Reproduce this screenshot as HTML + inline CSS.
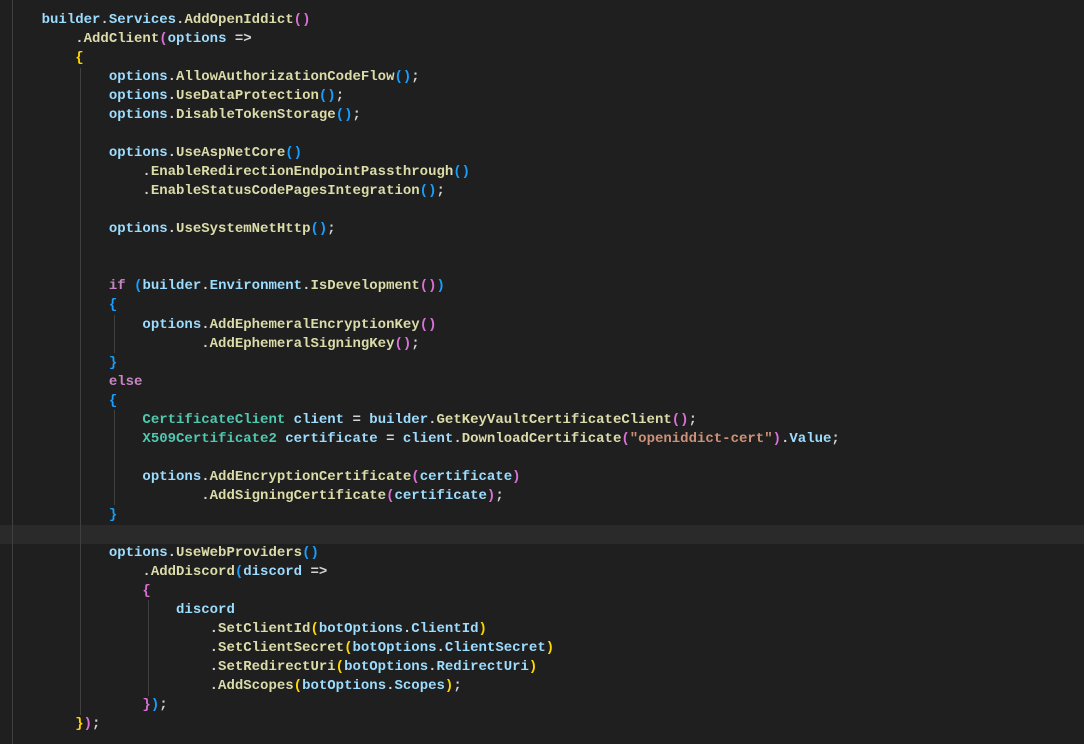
<!DOCTYPE html>
<html><head><meta charset="utf-8"><style>
html,body{margin:0;padding:0;background:#1f1f1f;width:1084px;height:744px;overflow:hidden}
#c{position:absolute;left:8px;top:11px;margin:0;font-family:"Liberation Mono",monospace;font-size:14px;font-weight:bold;line-height:19.03px;color:#d4d4d4;white-space:pre}
.hl{position:absolute;left:0;width:1084px;top:524.5px;height:19px;background:#2a2a2a}
.g{position:absolute;width:1px;background:#404040}
.v{color:#9cdcfe}.m{color:#dcdcaa}.k{color:#c586c0}.t{color:#4ec9b0}.s{color:#ce9178}
.y{color:#ffd700}.p{color:#da70d6}.b{color:#179fff}
</style></head><body>
<div class="hl"></div>
<div class="g" style="left:12px;top:0;height:744px"></div>
<div class="g" style="left:80px;top:68px;height:647px"></div>
<div class="g" style="left:114px;top:315px;height:38px"></div>
<div class="g" style="left:114px;top:410px;height:95px"></div>
<div class="g" style="left:148px;top:600px;height:96px"></div>
<pre id="c">    <span class="v">builder</span>.<span class="v">Services</span>.<span class="m">AddOpenIddict</span><span class="p">()</span>
        .<span class="m">AddClient</span><span class="p">(</span><span class="v">options</span> =&gt;
        <span class="y">{</span>
            <span class="v">options</span>.<span class="m">AllowAuthorizationCodeFlow</span><span class="b">()</span>;
            <span class="v">options</span>.<span class="m">UseDataProtection</span><span class="b">()</span>;
            <span class="v">options</span>.<span class="m">DisableTokenStorage</span><span class="b">()</span>;

            <span class="v">options</span>.<span class="m">UseAspNetCore</span><span class="b">()</span>
                .<span class="m">EnableRedirectionEndpointPassthrough</span><span class="b">()</span>
                .<span class="m">EnableStatusCodePagesIntegration</span><span class="b">()</span>;

            <span class="v">options</span>.<span class="m">UseSystemNetHttp</span><span class="b">()</span>;


            <span class="k">if</span> <span class="b">(</span><span class="v">builder</span>.<span class="v">Environment</span>.<span class="m">IsDevelopment</span><span class="p">()</span><span class="b">)</span>
            <span class="b">{</span>
                <span class="v">options</span>.<span class="m">AddEphemeralEncryptionKey</span><span class="p">()</span>
                       .<span class="m">AddEphemeralSigningKey</span><span class="p">()</span>;
            <span class="b">}</span>
            <span class="k">else</span>
            <span class="b">{</span>
                <span class="t">CertificateClient</span> <span class="v">client</span> = <span class="v">builder</span>.<span class="m">GetKeyVaultCertificateClient</span><span class="p">()</span>;
                <span class="t">X509Certificate2</span> <span class="v">certificate</span> = <span class="v">client</span>.<span class="m">DownloadCertificate</span><span class="p">(</span><span class="s">"openiddict-cert"</span><span class="p">)</span>.<span class="v">Value</span>;

                <span class="v">options</span>.<span class="m">AddEncryptionCertificate</span><span class="p">(</span><span class="v">certificate</span><span class="p">)</span>
                       .<span class="m">AddSigningCertificate</span><span class="p">(</span><span class="v">certificate</span><span class="p">)</span>;
            <span class="b">}</span>

            <span class="v">options</span>.<span class="m">UseWebProviders</span><span class="b">()</span>
                .<span class="m">AddDiscord</span><span class="b">(</span><span class="v">discord</span> =&gt;
                <span class="p">{</span>
                    <span class="v">discord</span>
                        .<span class="m">SetClientId</span><span class="y">(</span><span class="v">botOptions</span>.<span class="v">ClientId</span><span class="y">)</span>
                        .<span class="m">SetClientSecret</span><span class="y">(</span><span class="v">botOptions</span>.<span class="v">ClientSecret</span><span class="y">)</span>
                        .<span class="m">SetRedirectUri</span><span class="y">(</span><span class="v">botOptions</span>.<span class="v">RedirectUri</span><span class="y">)</span>
                        .<span class="m">AddScopes</span><span class="y">(</span><span class="v">botOptions</span>.<span class="v">Scopes</span><span class="y">)</span>;
                <span class="p">}</span><span class="b">)</span>;
        <span class="y">}</span><span class="p">)</span>;</pre>
</body></html>
